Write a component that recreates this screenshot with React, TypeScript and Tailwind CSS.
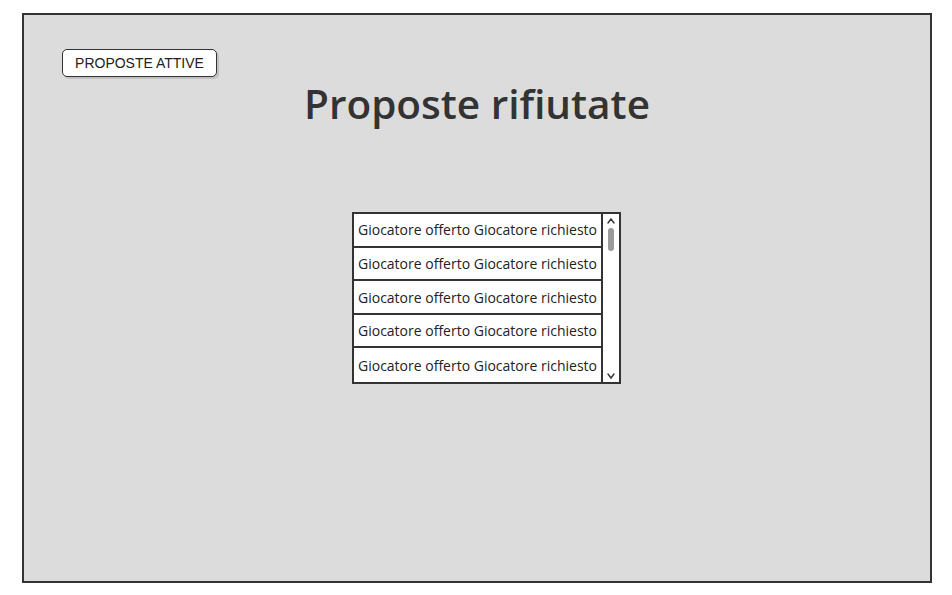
import React from "react";

const rows = Array.from({ length: 5 }, () => "Giocatore offerto Giocatore richiesto");

export default function App() {
  return (
    <div className="w-[952px] h-[595px] bg-white overflow-hidden pt-[13px] pl-[22px]" style={{ fontFamily: "'Liberation Sans', Arial, sans-serif" }}>
      <div className="w-[910px] h-[570px] bg-[#dcdcdc] border-2 border-[#333] flex flex-col">
        <div className="pl-[38px] pt-[34px]">
          <button className="w-[155px] h-[28px] bg-white border-[1.5px] border-[#333] rounded-[5px] shadow-[2px_2px_0_rgba(0,0,0,0.12)] text-[14px] text-[#222] tracking-[0px] flex items-center justify-center">
            PROPOSTE ATTIVE
          </button>
        </div>
        <div className="flex justify-center mt-[3px]">
          <h1 className="text-[40.5px] leading-[48px] font-semibold text-[#333]" style={{ fontFamily: "'Open Sans', sans-serif" }}>
            Proposte rifiutate
          </h1>
        </div>
        <div className="mt-[84px] ml-[328px] w-[269px] h-[172px] bg-white border-2 border-[#333] flex">
          <div className="flex-1 flex flex-col">
            {rows.map((r, i) => (
              <div
                key={i}
                className={`h-[34px] flex items-center pl-[4px] text-[14px] text-[#222] whitespace-nowrap overflow-hidden ${i < 4 ? "border-b-2 border-[#333]" : ""}`}
                style={{ fontFamily: "'Open Sans', sans-serif" }}
              >
                {r}
              </div>
            ))}
          </div>
          <div className="w-[18px] border-l-2 border-[#333] flex flex-col items-center relative">
            <svg width="10" height="8" viewBox="0 0 10 8" className="mt-[3px]">
              <path d="M2 6 L5 2 L8 6" fill="none" stroke="#333" strokeWidth="1.4" strokeLinecap="round" />
            </svg>
            <div className="w-[6px] h-[23px] rounded-full bg-[#999] mt-[3px]" />
            <div className="flex-1" />
            <svg width="10" height="8" viewBox="0 0 10 8" className="mb-[2px]">
              <path d="M2 2 L5 6 L8 2" fill="none" stroke="#333" strokeWidth="1.4" strokeLinecap="round" />
            </svg>
          </div>
        </div>
      </div>
    </div>
  );
}
